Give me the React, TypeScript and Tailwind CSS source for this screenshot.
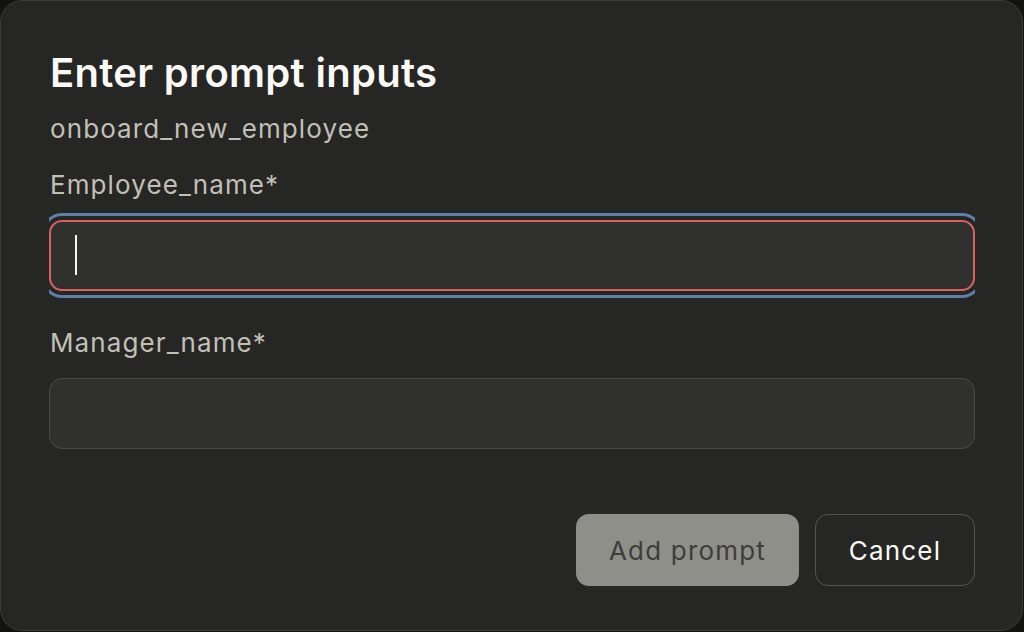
import React from 'react';

const font = { fontFamily: 'Inter, "Noto Sans", sans-serif' };

function Field({ label, focused }: { label: string; focused?: boolean }) {
  return (
    <div className="flex flex-col">
      <label className="pl-px text-[26px] leading-[32px] tracking-[1.1px] text-[#c2c0b6]">{label}</label>
      {/* ring is clipped left and right by the wrapper, as in the original */}
      <div className="mt-[11px] overflow-hidden py-[8px]">
        <div className="relative">
          <input
            readOnly
            className={`block h-[71px] w-full rounded-[13px] bg-[#30302e] px-[26px] text-[26px] text-[#faf9f5] outline-none ${
              focused
                ? 'border-2 border-[#d9625c] outline-[3px] outline-offset-[4px] outline-[#5d7faa] outline-solid'
                : 'border border-[#4a4a47]'
            }`}
          />
          {focused && <span className="absolute left-[26px] top-[15px] h-[40px] w-[2px] bg-[#f5f4ef]" />}
        </div>
      </div>
    </div>
  );
}

export default function App() {
  return (
    <div className="h-[632px] w-[1024px] bg-[#121211]" style={font}>
      <div className="flex h-[631px] w-[1023px] flex-col rounded-[22px] border border-[#3b3b38] bg-[#262624] pl-[48px] pr-[47px] pt-[48px]">
        <h2 className="pl-px text-[40px] font-semibold leading-[48px] tracking-[0.3px] text-[#faf9f5]">Enter prompt inputs</h2>
        <p className="mt-[16px] pl-px text-[26px] leading-[32px] tracking-[1.1px] text-[#c2c0b6]">onboard_new_employee</p>
        <div className="mt-[24px]">
          <Field label="Employee_name*" focused />
        </div>
        <div className="mt-[28px]">
          <Field label="Manager_name*" />
        </div>
        <div className="mt-[57px] flex justify-end gap-[16px]">
          <button className="h-[72px] w-[223px] rounded-[13px] bg-[#8f8f8a] text-[26px] tracking-[1.2px] text-[#3d3d3a]">Add prompt</button>
          <button className="h-[72px] w-[160px] rounded-[13px] border border-[#54544f] text-[26px] tracking-[1.2px] text-[#faf9f5]">Cancel</button>
        </div>
      </div>
    </div>
  );
}
